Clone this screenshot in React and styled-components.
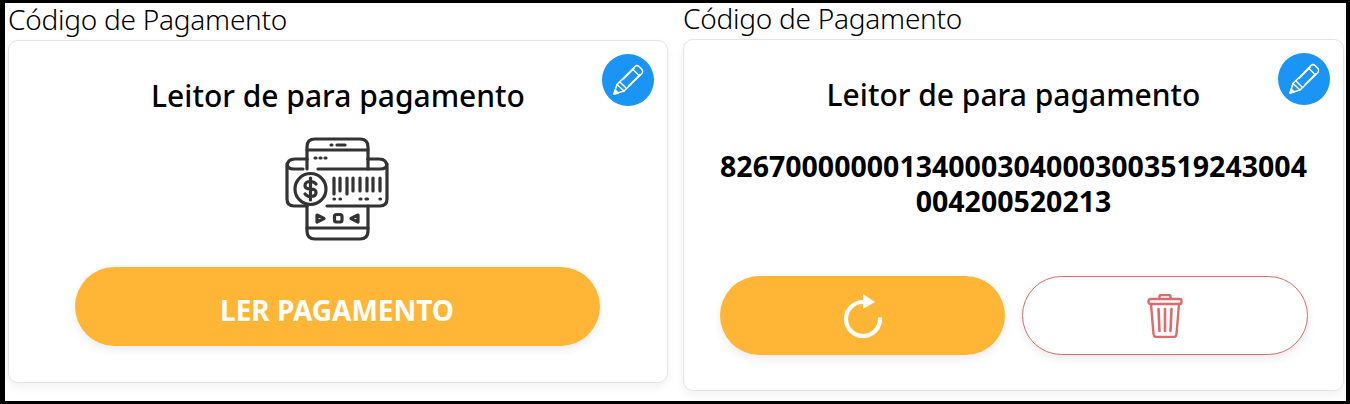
import React from 'react';
import styled, { createGlobalStyle } from 'styled-components';

const GlobalStyle = createGlobalStyle`
  html, body {
    margin: 0;
    padding: 0;
    background: #000;
  }
  * {
    box-sizing: border-box;
  }
`;

const Frame = styled.div`
  width: 1350px;
  height: 404px;
  border-style: solid;
  border-color: #000;
  border-width: 3px 4px 3px 5px;
  background: #fff;
  display: grid;
  grid-template-columns: 660px 660px;
  column-gap: 15px;
  padding: 0 0 0 3px;
  overflow: hidden;
  font-family: "Noto Sans", "Open Sans", sans-serif;
  color: #000;
`;

const Column = styled.section`
  display: flex;
  flex-direction: column;
  align-items: stretch;
`;

const Label = styled.div`
  font-size: 28px;
  font-weight: 300;
  line-height: ${({ $line }) => $line}px;
  letter-spacing: -0.25px;
  height: ${({ $tall }) => $tall}px;
  white-space: nowrap;
`;

const Card = styled.div`
  position: relative;
  height: ${({ $height }) => $height}px;
  width: ${({ $width }) => $width}px;
  border: 1px solid #e4e4e4;
  border-radius: 10px;
  background: #fff;
  box-shadow: 0 4px 10px rgba(0, 0, 0, 0.06);
  display: flex;
  flex-direction: column;
  align-items: center;
  padding-top: 36px;
`;

const EditButton = styled.button`
  position: absolute;
  top: 13px;
  right: 13px;
  width: 52px;
  height: 52px;
  border: none;
  border-radius: 50%;
  background: #1a94f5;
  padding: 0;
  display: flex;
  align-items: center;
  justify-content: center;
`;

const Title = styled.h2`
  margin: 0;
  font-size: 30px;
  font-weight: 500;
  line-height: 38px;
`;

const ReaderArt = styled.svg`
  display: block;
  margin: 22px 2px 0 0;
`;

const WideButton = styled.button`
  margin: 26px 2px 0 0;
  width: 525px;
  height: 79px;
  border: none;
  border-radius: 40px;
  padding: 6px 0 0;
  background: #ffb637;
  color: #fff;
  font-family: inherit;
  font-size: 28px;
  font-weight: 700;
  box-shadow: 0 4px 10px rgba(0, 0, 0, 0.08);
`;

const Code = styled.div`
  margin-top: 35px;
  width: 600px;
  font-size: 28.5px;
  font-weight: 700;
  line-height: 35px;
  text-align: center;
  word-break: break-all;
`;

const Actions = styled.div`
  display: grid;
  grid-template-columns: 285px 286px;
  column-gap: 17px;
  margin-top: 57px;
`;

const ActionButton = styled.button`
  height: 79px;
  border-radius: 40px;
  padding: 0;
  display: flex;
  align-items: center;
  justify-content: center;
  border: ${({ $outline }) => ($outline ? '1px solid #e06a6a' : 'none')};
  background: ${({ $outline }) => ($outline ? '#fff' : '#ffb637')};
  box-shadow: 0 4px 10px rgba(0, 0, 0, 0.08);
`;

const PencilIcon = () => (
  <svg width="34" height="34" viewBox="0 0 34 34" fill="none" stroke="#fff" strokeWidth="1.5" strokeLinejoin="round" strokeLinecap="round">
    <path d="M3 31 L6 21.5 L24 3.5 Q26 1.8 28 3.5 L31 6.5 Q32.5 8.5 31 10.5 L13 28 Z" />
    <path d="M6 21.5 L13 28 M9 19 L15.5 25.5 M21.5 6 L28.5 13 M12 16.5 L23 5.5 M18 22.5 L29 11.5" />
    <path d="M3 31 L4.2 27 L7.2 30 Z" fill="#fff" />
  </svg>
);

const ReaderIcon = () => (
  <ReaderArt width="104" height="104" viewBox="0 0 104 104" fill="none" stroke="#333" strokeWidth="3.2" strokeLinecap="round" strokeLinejoin="round">
    {/* phone, top and bottom parts */}
    <path d="M22 22 V10 Q22 2 30 2 H75 Q83 2 83 10 V22" />
    <path d="M22 13 H83" />
    <path d="M22 69 V94 Q22 102 30 102 H75 Q83 102 83 94 V69" />
    <path d="M22 91 H83" />
    {/* scroll band */}
    <path d="M22 22 H10 Q2 22 2 30 V62 Q2 69 9 69 H22 M42 69 H95 Q102 69 102 62 V30 Q102 22 94 22 H83" />
    <path d="M2 27 Q2 32 9 32 H18 M33 32 H95 Q102 32 102 27" />
    <path d="M22 22 V32 M83 22 V32" />
    <path d="M46 8 H47 M52 8 H60" />
    <path d="M30 21 H31 M35 21 H36 M40 21 H41" />
    <circle cx="25.5" cy="52" r="15.5" />
    <path d="M31 47 Q29 44.5 25.5 44.5 Q20 44.5 20 48.5 Q20 52 25.5 52 Q31 52 31 55.5 Q31 59.5 25.5 59.5 Q22 59.5 20 57 M25.5 41 V63" />
    <path d="M49 41 V57 M55 41 V54 M62 41 V57 M68 41 V54 M75 41 V54 M82 41 V54 M88 41 V54 M95 41 V54" />
    <path d="M55 62 H55.5 M75 62 H76 M81 62 H82.5 M95 62 H95.5 M49 62 H49.5" />
    <path d="M32 78 L39 81.5 L32 85 Z" />
    <rect x="49.5" y="77.5" width="7.5" height="7.5" rx="2" />
    <path d="M73 78 L66 81.5 L73 85 Z" />
  </ReaderArt>
);

const RefreshIcon = () => (
  <svg width="42" height="44" viewBox="-3 0 42 44" fill="none">
    <path d="M36 25 A17 17 0 1 1 19 8" stroke="#fff" strokeWidth="4.2" strokeLinecap="round" />
    <path d="M19 0 L31 8 L19 15 Z" fill="#fff" />
  </svg>
);

const TrashIcon = () => (
  <svg width="36" height="44" viewBox="0 0 36 44" fill="none" stroke="#e06a6a" strokeWidth="2.4" strokeLinecap="round" strokeLinejoin="round">
    <path d="M12.5 5 V2.5 Q12.5 1 14 1 H22 Q23.5 1 23.5 2.5 V5" />
    <rect x="1.5" y="5" width="33" height="5" rx="2" />
    <path d="M4 10 L6.5 40 Q6.8 43 9.5 43 H26.5 Q29.2 43 29.5 40 L32 10" />
    <path d="M11.5 15 L12.5 37 M18 15 V37 M24.5 15 L23.5 37" strokeWidth="2.6" />
  </svg>
);

export default function App() {
  return (
    <>
      <GlobalStyle />
      <Frame>
        <Column>
          <Label $tall={37} $line={32}>Código de Pagamento</Label>
          <Card $height={343} $width={660}>
            <EditButton><PencilIcon /></EditButton>
            <Title>Leitor de para pagamento</Title>
            <ReaderIcon />
            <WideButton>LER PAGAMENTO</WideButton>
          </Card>
        </Column>
        <Column>
          <Label $tall={36} $line={30}>Código de Pagamento</Label>
          <Card $height={352} $width={661}>
            <EditButton><PencilIcon /></EditButton>
            <Title>Leitor de para pagamento</Title>
            <Code>826700000001340003040003003519243004004200520213</Code>
            <Actions>
              <ActionButton><RefreshIcon /></ActionButton>
              <ActionButton $outline><TrashIcon /></ActionButton>
            </Actions>
          </Card>
        </Column>
      </Frame>
    </>
  );
}
